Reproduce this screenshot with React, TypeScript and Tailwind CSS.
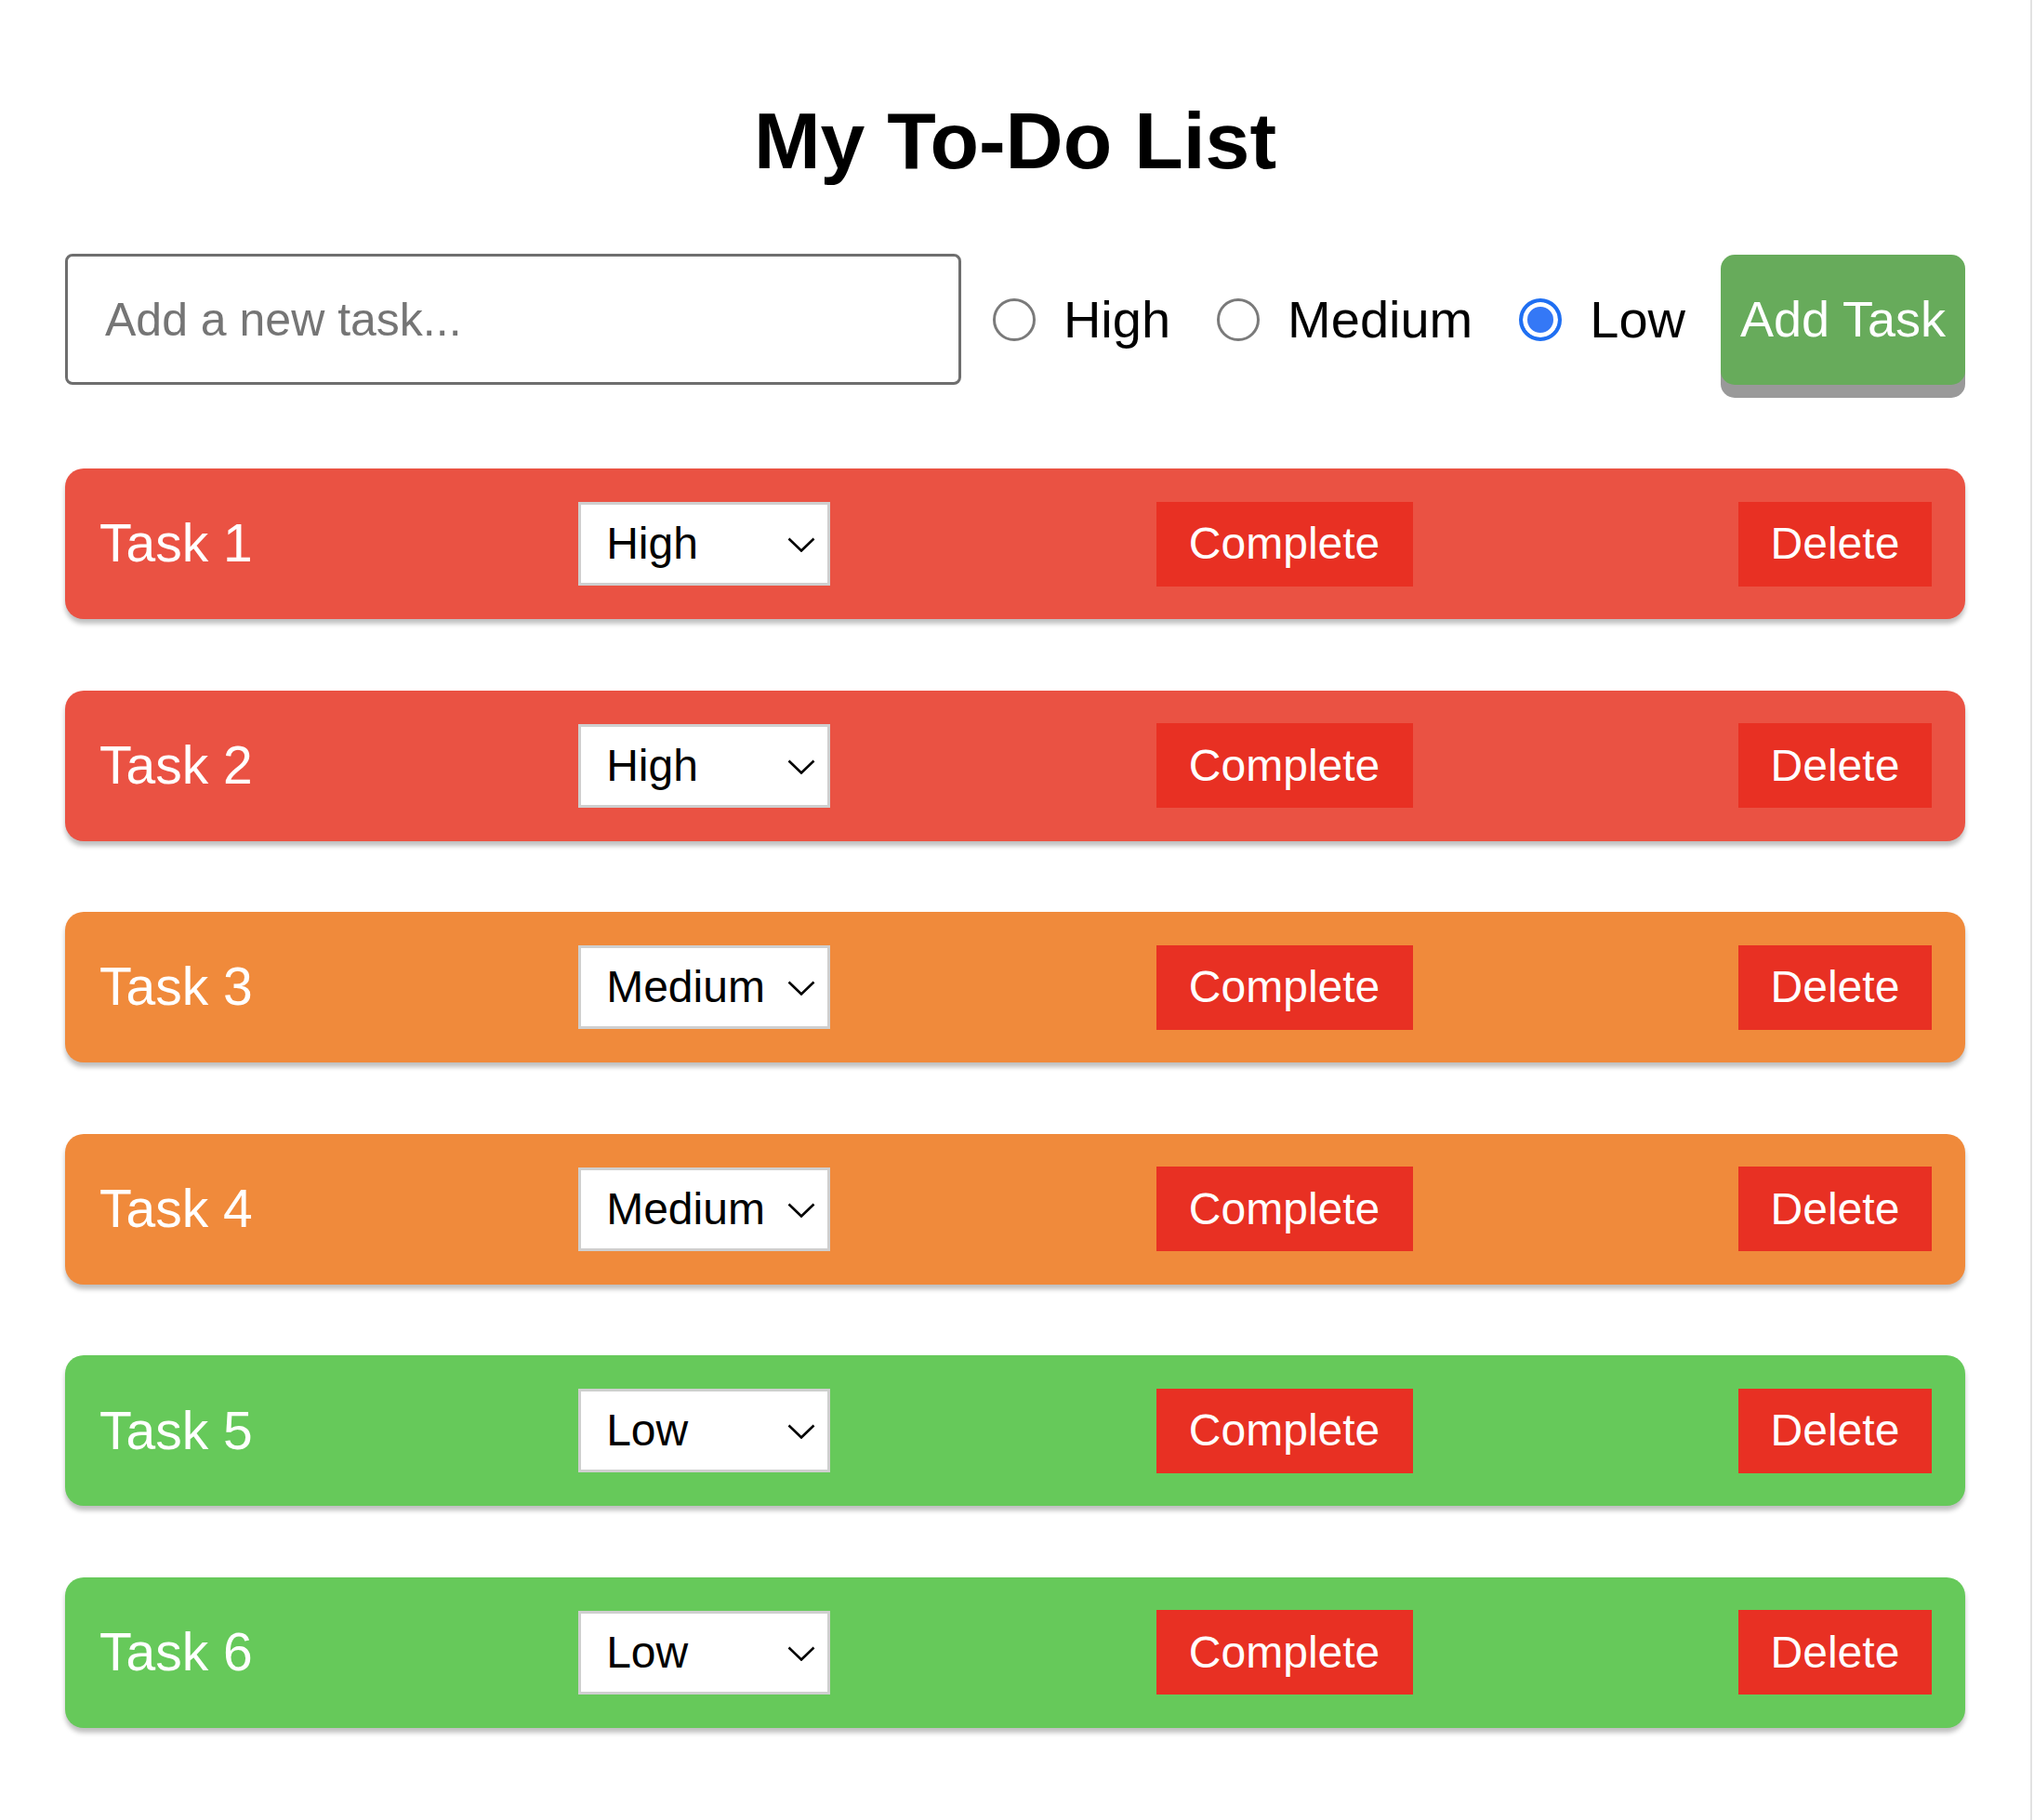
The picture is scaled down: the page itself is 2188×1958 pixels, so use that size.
import React, { useState } from 'react';

type Priority = 'High' | 'Medium' | 'Low';

interface Task {
  id: number;
  text: string;
  priority: Priority;
}

const rowColor: Record<Priority, string> = {
  High: 'bg-[#ea5243]',
  Medium: 'bg-[#f08a3b]',
  Low: 'bg-[#66c95a]',
};

const initialTasks: Task[] = [
  { id: 1, text: 'Task 1', priority: 'High' },
  { id: 2, text: 'Task 2', priority: 'High' },
  { id: 3, text: 'Task 3', priority: 'Medium' },
  { id: 4, text: 'Task 4', priority: 'Medium' },
  { id: 5, text: 'Task 5', priority: 'Low' },
  { id: 6, text: 'Task 6', priority: 'Low' },
];

const Chevron: React.FC = () => (
  <svg
    className="pointer-events-none absolute left-[225px] top-[38px] h-[16px] w-[30px]"
    viewBox="0 0 30 16"
    fill="none"
    stroke="#000"
    strokeWidth="2.6"
  >
    <polyline points="1.5,1.5 15,14.5 28.5,1.5" />
  </svg>
);

const App: React.FC = () => {
  const [tasks, setTasks] = useState<Task[]>(initialTasks);
  const [newTask, setNewTask] = useState<string>('');
  const [priority, setPriority] = useState<Priority>('Low');

  const addTask = () => {
    if (!newTask.trim()) return;
    setTasks([...tasks, { id: Date.now(), text: newTask.trim(), priority }]);
    setNewTask('');
  };

  const changePriority = (id: number, p: Priority) => {
    setTasks(tasks.map((t) => (t.id === id ? { ...t, priority: p } : t)));
  };

  const removeTask = (id: number) => {
    setTasks(tasks.filter((t) => t.id !== id));
  };

  const priorities: Priority[] = ['High', 'Medium', 'Low'];

  return (
    <div className="min-h-screen w-[2186px] border-r-2 border-[#e2e2e2] bg-white font-['Liberation_Sans',Arial,sans-serif] text-black">
      <div className="pb-[100px] pl-[70px] pr-[70px]">
        <h1 className="pt-[108px] text-center text-[86px] font-bold leading-none">My To-Do List</h1>

        {/* new task form */}
        <div className="mt-[79px] flex items-center">
          <input
            type="text"
            value={newTask}
            onChange={(e) => setNewTask(e.target.value)}
            placeholder="Add a new task..."
            className="h-[141px] min-w-0 flex-1 rounded-[8px] border-[3px] border-[#6e6e6e] pl-[40px] text-[50px] outline-none placeholder:text-[#757575]"
          />
          {priorities.map((p, i) => (
            <label
              key={p}
              className={`flex items-center gap-[30px] text-[56px] leading-none ${
                i === 0 ? 'ml-[34px]' : 'ml-[50px]'
              }`}
            >
              <input
                type="radio"
                name="priority"
                checked={priority === p}
                onChange={() => setPriority(p)}
                className="h-[46px] w-[46px] shrink-0 appearance-none rounded-full border-[3px] border-[#7a7a7a] bg-white checked:border-[4px] checked:border-[#1f6ff2] checked:bg-[#3478f6] checked:shadow-[inset_0_0_0_5px_#fff]"
              />
              <span>{p}</span>
            </label>
          ))}
          <button
            onClick={addTask}
            className="ml-[38px] h-[140px] w-[263px] shrink-0 rounded-[15px] bg-[#67ab5b] text-[54px] text-white shadow-[0_14px_0_#999]"
          >
            Add Task
          </button>
        </div>

        {/* task list */}
        <ul className="mt-[90px] flex flex-col gap-[76.6px]">
          {tasks.map((task) => (
            <li
              key={task.id}
              className={`flex h-[162px] items-center justify-between rounded-[20px] pl-[37px] pr-[36px] shadow-[0_5px_5px_rgba(0,0,0,0.25)] ${rowColor[task.priority]}`}
            >
              <span className="text-[57px] text-white">{task.text}</span>
              <div className="relative h-[90px] w-[271px]">
                <select
                  value={task.priority}
                  onChange={(e) => changePriority(task.id, e.target.value as Priority)}
                  className="h-full w-full appearance-none rounded-none border-[3px] border-[#cfcfcf] bg-white pl-[27px] text-[48px] text-black outline-none"
                >
                  {priorities.map((p) => (
                    <option key={p} value={p}>
                      {p}
                    </option>
                  ))}
                </select>
                <Chevron />
              </div>
              <button
                onClick={() => removeTask(task.id)}
                className="h-[91px] w-[276px] bg-[#e83023] text-[48px] text-white"
              >
                Complete
              </button>
              <button
                onClick={() => removeTask(task.id)}
                className="h-[91px] w-[208px] bg-[#e83023] text-[48px] text-white"
              >
                Delete
              </button>
            </li>
          ))}
        </ul>
      </div>
    </div>
  );
};

export default App;
